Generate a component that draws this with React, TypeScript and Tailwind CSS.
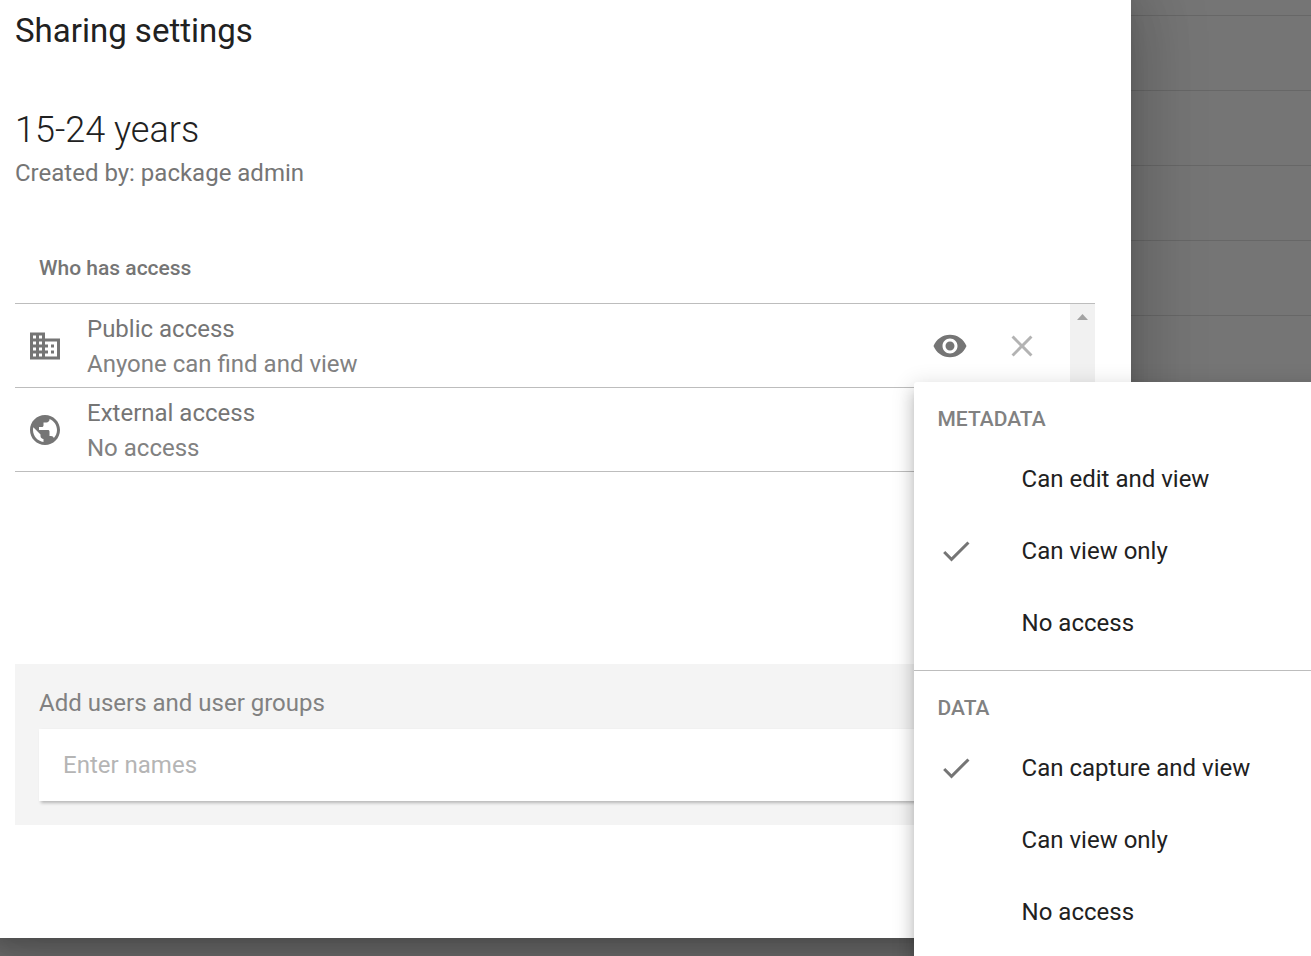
import React from "react";

function Icon({ d, className }: { d: string; className: string }) {
  return (
    <svg viewBox="0 0 24 24" fill="currentColor" className={`block shrink-0 ${className}`}>
      <path d={d} />
    </svg>
  );
}

const ICONS = {
  business:
    "M12 7V3H2v18h20V7H12zM6 19H4v-2h2v2zm0-4H4v-2h2v2zm0-4H4V9h2v2zm0-4H4V5h2v2zm4 12H8v-2h2v2zm0-4H8v-2h2v2zm0-4H8V9h2v2zm0-4H8V5h2v2zm10 12h-8v-2h2v-2h-2v-2h2v-2h-2V9h8v10zm-2-8h-2v2h2v-2zm0 4h-2v2h2v-2z",
  globe:
    "M12 2C6.48 2 2 6.48 2 12s4.48 10 10 10 10-4.48 10-10S17.52 2 12 2zm-1 17.93c-3.95-.49-7-3.85-7-7.93 0-.62.08-1.21.21-1.79L9 15v1c0 1.1.9 2 2 2v1.93zm6.9-2.54c-.26-.81-1-1.39-1.9-1.39h-1v-3c0-.55-.45-1-1-1H8v-2h2c.55 0 1-.45 1-1V7h2c1.1 0 2-.9 2-2v-.41c2.93 1.19 5 4.06 5 7.41 0 2.08-.8 3.97-2.1 5.39z",
  eye: "M12 4.5C7 4.5 2.73 7.61 1 12c1.73 4.39 6 7.5 11 7.5s9.27-3.11 11-7.5c-1.73-4.39-6-7.5-11-7.5zM12 17c-2.76 0-5-2.24-5-5s2.24-5 5-5 5 2.24 5 5-2.24 5-5 5zm0-8c-1.66 0-3 1.34-3 3s1.34 3 3 3 3-1.34 3-3-1.34-3-3-3z",
  close:
    "M19 6.41L17.59 5 12 10.59 6.41 5 5 6.41 10.59 12 5 17.59 6.41 19 12 13.41 17.59 19 19 17.59 13.41 12z",
  check: "M9 16.17L4.83 12l-1.42 1.41L9 19 21 7l-1.41-1.41z",
};

function AccessRow({ icon, title, detail, children }: { icon: string; title: string; detail: string; children?: React.ReactNode }) {
  return (
    <div className="flex h-[84px] items-center border-b border-[#bdbdbd] pl-3">
      <Icon d={icon} className="mt-px size-9 text-[#757575]" />
      <div className="ml-6 flex-1 pt-[2px] text-[24px] leading-[35px]">
        <div className="text-[#757575]">{title}</div>
        <div className="text-[#818181]">{detail}</div>
      </div>
      {children}
    </div>
  );
}

function MenuSection({ title, items, selected }: { title: string; items: string[]; selected: number }) {
  return (
    <div>
      <div className="mb-3 flex h-[49px] items-end pl-[23.5px] text-[21px] leading-[24px] font-medium text-[#818181]">{title}</div>
      {items.map((item, i) => (
        <div key={item} className="flex h-[72px] items-center pl-[23.6px] text-[24px] text-[#212121]">
          <div className="w-[84px]">
            {i === selected && <Icon d={ICONS.check} className="size-9 text-[#757575]" />}
          </div>
          {item}
        </div>
      ))}
    </div>
  );
}

export default function App() {
  return (
    <div className="relative h-[956px] w-[1311px] overflow-hidden bg-[#757575] font-['Roboto',sans-serif]">
      <div className="h-4 border-b border-[#676767]" />
      {[0, 1, 2, 3, 4, 5, 6, 7, 8, 9, 10, 11].map((n) => (
        <div key={n} className="h-[75px] border-b border-[#676767]" />
      ))}

      <div className="absolute -top-6 -left-[21px] h-[962px] w-[1152px] bg-white px-9 pt-9 shadow-[0_16px_22px_-10px_rgba(0,0,0,0.2),0_36px_57px_4px_rgba(0,0,0,0.14),0_13px_69px_12px_rgba(0,0,0,0.12)]">
        <h1 className="text-[33px] leading-[37px] text-[#212121]">Sharing settings</h1>
        <h2 className="mt-[60px] text-[36px] leading-[42px] font-light text-[#212121]">15-24 years</h2>
        <p className="mt-[4px] text-[24px] leading-[36px] text-[#757575]">Created by: package admin</p>
        <div className="mt-[64px] flex h-[48px] items-start pl-6 text-[21px] leading-[26px] font-medium text-[#757575]">
          Who has access
        </div>
        <div className="flex h-[169px] border-t border-[#bdbdbd]">
          <div className="flex-1">
            <AccessRow icon={ICONS.business} title="Public access" detail="Anyone can find and view">
              <Icon d={ICONS.eye} className="size-9 text-[#757575]" />
              <Icon d={ICONS.close} className="mr-[30px] ml-9 size-9 text-[#b3b3b3]" />
            </AccessRow>
            <AccessRow icon={ICONS.globe} title="External access" detail="No access" />
          </div>
          <div className="w-[25px] bg-[#f1f1f1] pt-[10px]">
            <svg viewBox="0 0 11 6" className="mx-auto block h-[6px] w-[11px]" fill="#a3a3a3">
              <path d="M0 6L5.5 0L11 6Z" />
            </svg>
          </div>
        </div>
        <div className="mt-[192px] h-[161px] bg-[#f4f4f4] px-6 pt-[21px]">
          <div className="text-[24px] leading-[36px] text-[#818181]">Add users and user groups</div>
          <div className="mt-2 flex h-[72px] items-center bg-white pl-6 text-[24px] text-[#b5b5b5] shadow-[2px_2px_3px_rgba(0,0,0,0.25)]">
            Enter names
          </div>
        </div>
      </div>

      <div className="absolute top-[382px] left-[914px] h-[620px] w-[430px] rounded-[3px] bg-white shadow-[0_7px_7px_-4px_rgba(0,0,0,0.2),0_12px_15px_1px_rgba(0,0,0,0.14),0_4px_21px_3px_rgba(0,0,0,0.12)]">
        <div className="h-[289px] border-b border-[#bdbdbd]">
          <MenuSection title="METADATA" items={["Can edit and view", "Can view only", "No access"]} selected={1} />
        </div>
        <MenuSection title="DATA" items={["Can capture and view", "Can view only", "No access"]} selected={0} />
      </div>
    </div>
  );
}
